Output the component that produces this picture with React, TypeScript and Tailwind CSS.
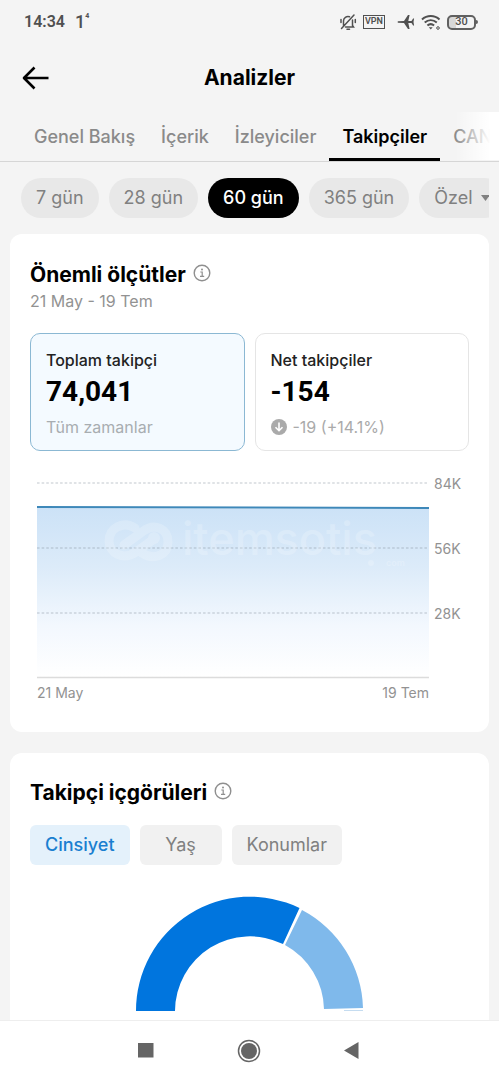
import { useState } from 'react';

const tabs = ['Genel Bakış', 'İçerik', 'İzleyiciler', 'Takipçiler', 'CANLI'];
const ranges = ['7 gün', '28 gün', '60 gün', '365 gün'];
const insights = ['Cinsiyet', 'Yaş', 'Konumlar'];
const yLabels = ['84K', '56K', '28K'];

function BellOffIcon() {
  return (
    <svg width="18" height="18" viewBox="0 0 18 18" fill="none" stroke="currentColor" strokeWidth="1.5" strokeLinecap="round">
      <path d="M4.500 12.500V8a4.500 4.500 0 0 1 6-4.200M13.500 7v5.500l1 1.500H6.500M8 16.300h2.500M15 2 2.500 15.500" />
      <path d="M2 6.500v3M16.300 6.500v3" />
    </svg>
  );
}

function WifiIcon() {
  return (
    <svg width="20" height="17" viewBox="0 0 20 17" fill="none" stroke="currentColor" strokeWidth="2">
      <path d="M1 5.500c5-4.600 12.500-4.600 17.500 0M3.700 8.600c3.600-3.200 8.500-3.200 12.100 0M6.400 11.600c2-1.800 4.700-1.800 6.700 0" />
      <path d="M7.800 13.300 9.750 15.500l1.950-2.200Z" fill="currentColor" stroke="none" />
      <circle cx="17" cy="14" r="1.300" strokeWidth="1" />
    </svg>
  );
}

function StatusBar() {
  return (
    <div className="flex h-11 shrink-0 items-center justify-between pl-6 pr-[21px] text-[#505050]">
      <div className="flex items-center gap-[10px]">
        <span className="font-[Roboto] text-base font-semibold">14:34</span>
        <span className="flex items-start font-[Roboto]">
          <span className="text-lg font-medium leading-none">1</span>
          <span className="text-[7px] font-bold leading-none">4</span>
        </span>
      </div>
      <div className="flex items-center">
        <BellOffIcon />
        <span className="ml-[6px] flex h-[14px] w-[22px] items-center justify-center border border-[#505050] font-[Roboto] text-[9px] font-semibold">
          VPN
        </span>
        <svg className="ml-3" width="18" height="16" viewBox="0 0 18 16" fill="currentColor">
          <path d="M1 7.200 7 6.900 11 1h1.600l-1.300 6h3.200l1.600-2.500h1L16.500 8l.6 3.500h-1L14.500 9h-3.200l1.300 6H11L7 9.100 1 8.800Q0 8 1 7.200Z" />
        </svg>
        <span className="ml-[6px]">
          <WifiIcon />
        </span>
        <span className="ml-[6px] flex h-[15px] w-[29px] items-center justify-center rounded-[5px] border-2 border-[#606060] bg-gradient-to-r from-[#d8d8d8] from-30% to-transparent to-30% font-[Roboto] text-[11px] font-medium">
          30
        </span>
        <span className="h-1 w-[2px] rounded-r bg-[#606060]" />
      </div>
    </div>
  );
}

function SectionTitle({ children }: { children: string }) {
  return (
    <div className="flex items-center gap-[7px]">
      <h2 className="text-[21px] font-bold leading-7 text-black">{children}</h2>
      <svg className="-mt-1 text-[#8f8f8f]" width="18" height="18" viewBox="0 0 18 18" fill="none" stroke="currentColor" strokeWidth="1.4">
        <circle cx="9" cy="9" r="7.800" />
        <path d="M7.300 8H9.200v4.300M7 12.400h4.200" strokeWidth="1.200" />
        <circle cx="9" cy="5.400" r="1" fill="currentColor" stroke="none" />
      </svg>
    </div>
  );
}

function Watermark() {
  return (
    <svg
      className="absolute left-[67px] top-[30px]"
      width="310"
      height="72"
      viewBox="0 -10 310 72"
      fill="none"
      opacity="0.2"
    >
      <g stroke="#fff" strokeWidth="9" strokeLinecap="round" strokeLinejoin="round">
        <path d="M31 13C18 5 5 14 5 26s14 20 27 11L50 24" />
        <path d="M20 30 38 17c13-10 26-3 26 10s-14 19-26 11" />
      </g>
      <circle cx="50" cy="23" r="6" fill="#fff" />
      <text x="78" y="40" fill="#fff" fontSize="45" fontWeight="500" fontFamily="Inter, sans-serif">
        itemsotis
      </text>
      <circle cx="267" cy="48" r="3" fill="#fff" />
      <text x="282" y="51" fill="#fff" fontSize="9" fontWeight="600" fontFamily="Inter, sans-serif">
        com
      </text>
    </svg>
  );
}

function FollowersChart() {
  return (
    <div className="mt-6 px-[7px]">
      <div className="flex gap-[5px]">
        <div className="relative min-w-0 flex-1">
          <svg className="block h-[204px] w-full" viewBox="0 0 391 204" preserveAspectRatio="none">
            <defs>
              <linearGradient id="area" x1="0" y1="0" x2="0" y2="1">
                <stop offset="0" stopColor="#cce2f7" />
                <stop offset="0.35" stopColor="#dcebf9" />
                <stop offset="0.7" stopColor="#f3f8fe" />
                <stop offset="1" stopColor="#ffffff" />
              </linearGradient>
            </defs>
            <path d="M0 33 391 34V202H0Z" fill="url(#area)" />
            {[8, 73, 138].map((y) => (
              <line key={y} x1="0" x2="391" y1={y} y2={y} stroke="#7b8794" strokeOpacity="0.3" strokeWidth="1.5" strokeDasharray="2.6 2" />
            ))}
            <line x1="0" x2="391" y1="202.5" y2="202.5" stroke="#dcdcdc" strokeWidth="1.5" />
            <line x1="0" x2="391" y1="32" y2="33" stroke="#3e88b9" strokeWidth="2" />
          </svg>
          <Watermark />
        </div>
        <div className="flex w-7 flex-col gap-12">
          {yLabels.map((label) => (
            <span key={label} className="text-sm leading-[17px] text-[#929292]">{label}</span>
          ))}
        </div>
      </div>
      <div className="mr-[33px] mt-1 flex justify-between text-sm leading-5 text-[#929292]">
        <span>21 May</span>
        <span>19 Tem</span>
      </div>
    </div>
  );
}

function GenderChart() {
  return (
    <svg className="mx-auto mt-[31px] block" width="230" height="116" viewBox="0 0 230 116">
      <path d="M1 115A114 114 0 0 1 164.500 12L148 48A75 75 0 0 0 40 115Z" fill="#0075de" />
      <path d="M167 14A114 114 0 0 1 228 112L189 113A75 75 0 0 0 150 49Z" fill="#7fb9eb" />
      <path d="M209 114.500H228" stroke="#c5dcf0" />
    </svg>
  );
}

export default function App() {
  const [tab, setTab] = useState('Takipçiler');
  const [range, setRange] = useState('60 gün');
  const [insight, setInsight] = useState('Cinsiyet');

  return (
    <div lang="tr" className="flex h-screen flex-col overflow-hidden bg-[#f4f4f4] font-[Inter,sans-serif]">
      <StatusBar />

      <header className="relative flex h-[68px] shrink-0 items-center justify-center">
        <button aria-label="Geri" className="absolute left-[22px] text-black">
          <svg width="28" height="24" viewBox="0 0 28 24" fill="none" stroke="currentColor" strokeWidth="2.6" strokeLinejoin="round">
            <path d="M12.500 1.500 2 12l10.500 10.500M2 12h24.500" />
          </svg>
        </button>
        <h1 className="text-[21px] font-bold text-black">Analizler</h1>
      </header>

      <nav className="relative shrink-0 border-b border-[#d6d6d6]">
        <div className="flex overflow-hidden pl-[21px]">
          {tabs.map((t) => (
            <button
              key={t}
              onClick={() => setTab(t)}
              className={`h-[49px] shrink-0 border-b-[3px] px-[13px] pt-1 text-lg ${
                t === tab ? 'border-black font-semibold text-black' : 'border-transparent font-medium text-[#8a8a8a]'
              }`}
            >
              {t}
            </button>
          ))}
        </div>
        <div className="pointer-events-none absolute bottom-px right-0 top-0 w-11 bg-gradient-to-r from-white/0 to-white to-80%" />
      </nav>

      <main className="min-h-0 flex-1 overflow-hidden px-[10px] pt-4">
        <div className="flex gap-[10px] overflow-hidden pl-[11px]">
          {ranges.map((r) => (
            <button
              key={r}
              onClick={() => setRange(r)}
              className={`h-10 shrink-0 rounded-full px-[15px] text-lg ${
                r === range ? 'bg-black font-medium text-white' : 'bg-[#e8e8e8] font-normal text-[#808080]'
              }`}
            >
              {r}
            </button>
          ))}
          <button className="flex h-10 shrink-0 items-center gap-2 rounded-full bg-[#e8e8e8] px-[15px] text-lg font-normal text-[#808080]">
            Özel
            <svg width="9" height="6" viewBox="0 0 9 6" fill="currentColor">
              <path d="M0 0h9L4.500 6Z" />
            </svg>
          </button>
        </div>

        <section className="mt-4 rounded-xl bg-white px-5 pb-[29px] pt-[27px]">
          <SectionTitle>Önemli ölçütler</SectionTitle>
          <p className="text-base leading-6 text-[#929292]">21 May - 19 Tem</p>

          <div className="mt-5 grid grid-cols-2 gap-[10px]">
            <button className="rounded-[10px] border border-[#8bb8d3] bg-[#f4faff] px-[15px] pb-[11px] pt-[14px] text-left">
              <span className="block text-base font-medium leading-6 text-[#222222]">Toplam takipçi</span>
              <span className="block font-[Roboto] text-[28px] font-bold leading-10 text-black">74,041</span>
              <span className="mt-[3px] block text-base leading-6 text-[#a8adb1]">Tüm zamanlar</span>
            </button>
            <button className="rounded-[10px] border border-[#e5e5e5] bg-white px-[15px] pb-[11px] pt-[14px] text-left">
              <span className="block text-base font-medium leading-6 text-[#222222]">Net takipçiler</span>
              <span className="block font-[Roboto] text-[28px] font-bold leading-10 text-black">-154</span>
              <span className="mt-[3px] flex items-center gap-[6px] text-base leading-6 text-[#aaaaaa]">
                <svg width="16" height="16" viewBox="0 0 16 16" fill="none">
                  <circle cx="8" cy="8" r="8" fill="#aaaaaa" />
                  <path d="M8 3.500v8M4.500 8.200 8 11.700l3.500-3.500" stroke="#fff" strokeWidth="1.600" />
                </svg>
                -19 (+14.1%)
              </span>
            </button>
          </div>

          <FollowersChart />
        </section>

        <section className="mt-[21px] rounded-t-xl bg-white px-5 pb-10 pt-[26px]">
          <SectionTitle>Takipçi içgörüleri</SectionTitle>
          <div className="mt-[18px] flex gap-[10px]">
            {insights.map((i) => (
              <button
                key={i}
                onClick={() => setInsight(i)}
                className={`h-10 min-w-[82px] rounded-md px-[15px] text-lg ${
                  i === insight ? 'bg-[#e4f1fb] font-medium text-[#1a7fd0]' : 'bg-[#f1f1f1] font-normal text-[#808080]'
                }`}
              >
                {i}
              </button>
            ))}
          </div>
          <GenderChart />
        </section>
      </main>

      <footer className="flex h-[60px] shrink-0 items-center justify-between border-t border-[#eeeeee] bg-white pl-[138px] pr-[140px] text-[#656565]">
        <button aria-label="Son uygulamalar">
          <svg width="16" height="16" viewBox="0 0 16 16" fill="currentColor">
            <path d="M0 0h15.500v14.500H0Z" />
          </svg>
        </button>
        <button aria-label="Ana ekran">
          <svg width="24" height="24" viewBox="0 0 24 24" fill="none">
            <circle cx="12" cy="12" r="10.500" stroke="currentColor" strokeWidth="1.500" />
            <circle cx="12" cy="12" r="8" fill="currentColor" />
          </svg>
        </button>
        <button aria-label="Geri dön">
          <svg width="16" height="18" viewBox="0 0 16 18" fill="currentColor">
            <path d="M15.500 0v17L1 8.500Z" />
          </svg>
        </button>
      </footer>
    </div>
  );
}
